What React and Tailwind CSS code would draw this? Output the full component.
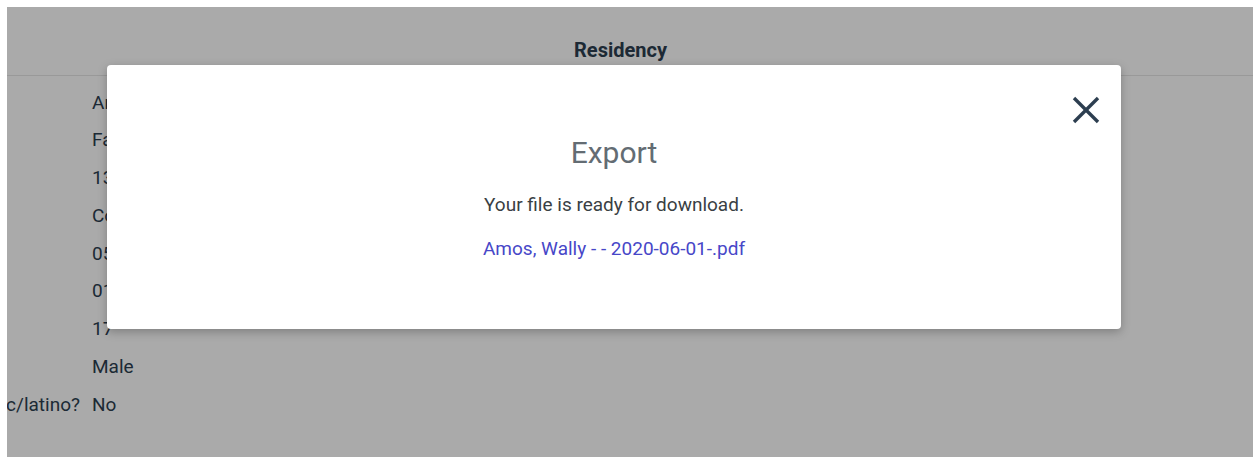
import React from 'react';

const rows = [
  { label: 'Last name', value: 'Amos' },
  { label: 'Facility', value: 'Fairview House' },
  { label: 'Address', value: '1325 Oak Street' },
  { label: 'City', value: 'Columbus' },
  { label: 'Date of birth', value: '05/14/2003' },
  { label: 'Intake date', value: '01/06/2020' },
  { label: 'Age', value: '17' },
  { label: 'Gender', value: 'Male' },
  { label: 'Is the client Hispanic/latino?', value: 'No' },
];

function CloseIcon() {
  return (
    <svg width="28" height="28" viewBox="0 0 28 28" fill="none" stroke="currentColor" strokeWidth="3.4" strokeLinecap="butt">
      <line x1="2" y1="2" x2="26" y2="26" />
      <line x1="26" y1="2" x2="2" y2="26" />
    </svg>
  );
}

export default function App() {
  return (
    <div className="h-[457px] w-[1253px] bg-white pl-[7px] pt-[7px] font-['Roboto',sans-serif] text-[#2c3e50]">
      <div className="relative h-full w-full overflow-hidden bg-white">
        {/* residency details */}
        <div className="flex h-[69px] items-end justify-center border-b border-[#e6e6e6] pb-[13px] pr-[19px]">
          <h2 className="text-[20px] font-bold leading-6">Residency</h2>
        </div>
        <div className="flex pt-[8px] text-[19px]">
          <div className="flex w-[73px] shrink-0 justify-end">
            <div className="flex shrink-0 flex-col">
              {rows.map((r) => (
                <div key={r.label} className="flex h-[37.75px] items-center whitespace-nowrap">
                  {r.label}
                </div>
              ))}
            </div>
          </div>
          <div className="ml-[12px] flex flex-col">
            {rows.map((r) => (
              <div key={r.label} className="flex h-[37.75px] items-center whitespace-nowrap">
                {r.value}
              </div>
            ))}
          </div>
        </div>

        {/* export dialog */}
        <div className="absolute inset-0 bg-black/[0.333]">
          <div className="absolute left-[100px] top-[58px] flex h-[264px] w-[1014px] flex-col items-center rounded-[4px] bg-white pt-[71px] shadow-[0_3px_10px_rgba(0,0,0,0.25)]">
            <button className="absolute right-[21px] top-[31px] text-[#2c3e50]">
              <CloseIcon />
            </button>
            <h3 className="text-[30px] leading-[33px] text-[#636c73]">Export</h3>
            <p className="mt-[24px] text-[19px] leading-6 text-[#3a3f44]">Your file is ready for download.</p>
            <a href="#" className="mt-[20px] text-[19px] leading-6 text-[#4747c8]">
              Amos, Wally - - 2020-06-01-.pdf
            </a>
          </div>
        </div>
      </div>
    </div>
  );
}
